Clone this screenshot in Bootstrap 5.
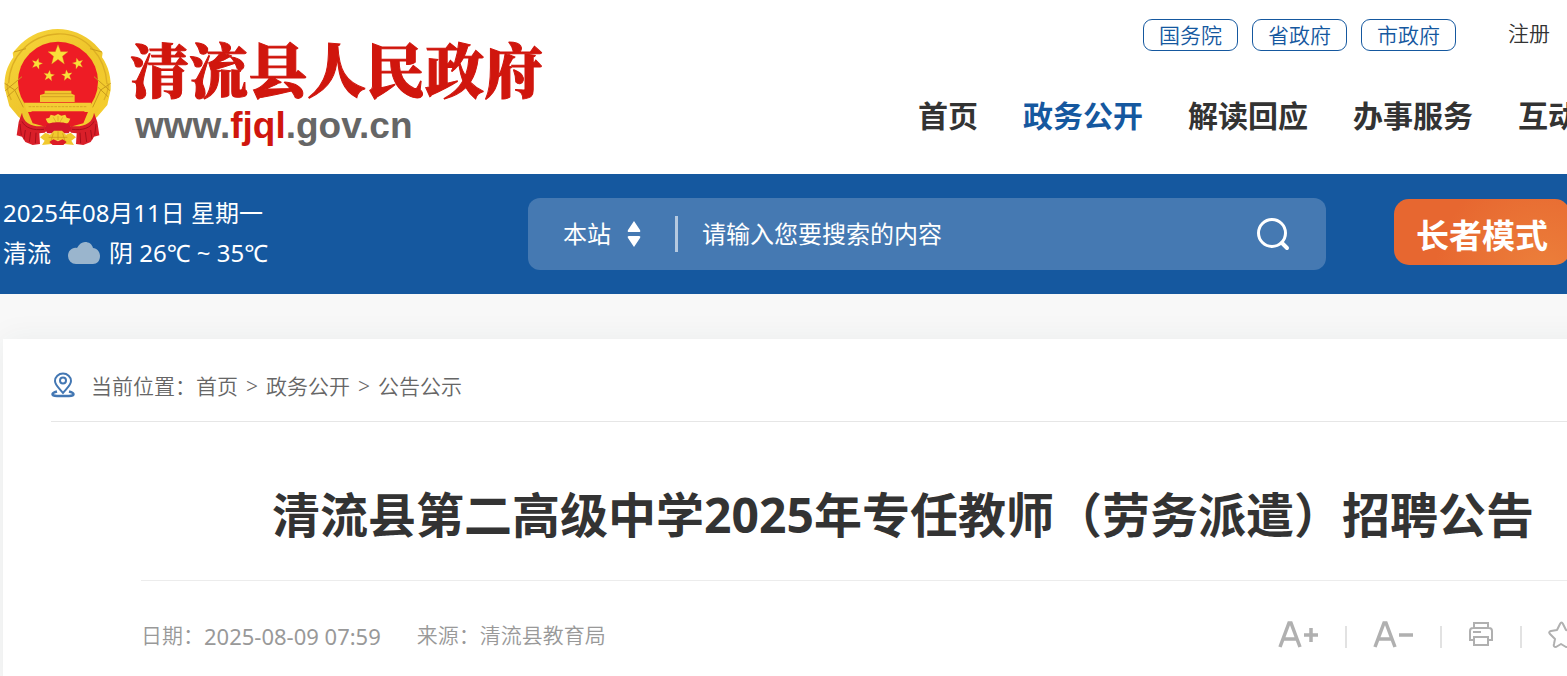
<!DOCTYPE html>
<html lang="zh-CN">
<head>
<meta charset="utf-8">
<meta name="viewport" content="width=device-width, initial-scale=1">
<title>清流县第二高级中学2025年专任教师（劳务派遣）招聘公告</title>
<link href="https://cdn.jsdelivr.net/npm/bootstrap@5.3.0/dist/css/bootstrap.min.css" rel="stylesheet">
<style>
  :root { --gov-blue: #15589f; --ink: #333; }
  body { font-family: "Noto Sans", "Noto Sans CJK SC", sans-serif; background: #f8f8f8; color: var(--ink); overflow-x: hidden; }
  a { color: inherit; text-decoration: none; }
  .site { min-width: 1806px; padding: 0 3px; }
  .site-head { height: 174px; padding-right: 222px; }
  .brand-emblem { width: 130px; height: 135px; margin-left: -3px; margin-top: 20px; }
  .brand-words { margin-top: 34px; }
  .brand-name { font-family: "Noto Serif CJK SC", "Noto Sans CJK SC", sans-serif; font-weight: 900; font-size: 59px; line-height: 68px; color: #d0160d; -webkit-text-stroke: 1px #d0160d; }
  .brand-url { font-family: "Liberation Sans", sans-serif; font-weight: 700; font-size: 37px; line-height: 48px; color: #666; padding-left: 5px; }
  .brand-url b { color: #d0160d; }
  .head-links { width: 663px; }
  .quick { font-size: 21px; padding: 19px 0 0 225px; gap: 14px; font-weight: 350; }
  .quick .pill { width: 95px; height: 32px; line-height: 30px; border: 1px solid var(--gov-blue); border-radius: 9px; color: var(--gov-blue); text-align: center; }
  .quick .signup { margin-left: 38px; line-height: 28px; }
  .main-menu { margin-top: 43px; gap: 45px; font-size: 30px; line-height: 44px; font-weight: 700; }
  .main-menu .active { color: var(--gov-blue); }
  .blue-bar { background: var(--gov-blue); height: 120px; color: #fff; }
  .today { width: 525px; font-size: 24px; line-height: 40px; padding-top: 19px; }
  .search-box { width: 798px; height: 72px; margin-top: 24px; border-radius: 12px; background: #4579b2; padding: 0 35px; }
  .search-box select, .search-box input, .search-box button { appearance: none; background: none; border: 0; color: #fff; font-size: 24px; padding: 0; outline-offset: 4px; }
  .search-box select { width: 48px; }
  .search-box input::placeholder { color: #fff; opacity: 1; }
  .search-box input { line-height: 36px; }
  .split { width: 3px; height: 36px; background: #b5c9e0; margin: 0 24px 0 34px; }
  .elder { width: 176px; height: 66px; margin: 25px 0 0 68px; border: 0; border-radius: 15px; color: #fff; font-size: 33px; font-weight: 700; line-height: 66px; padding: 4px 0 0; background: radial-gradient(circle at 85% 115%, #ec803b, #e76730 65%); }
  .sheet { margin-top: 45px; background: #fff; min-height: calc(100vh - 339px); box-shadow: 0 0 30px rgba(20, 60, 60, .06); padding-left: 48px; }
  .crumbs { height: 83px; padding-top: 14px; border-bottom: 1px solid #e6e6e6; font-size: 21px; color: #666; font-weight: 350; }
  .crumbs ol { gap: 8px; }
  .article { padding: 0 138px 0 90px; }
  .article h1 { font-size: 48px; line-height: 72px; font-weight: 700; margin: 0; padding: 57px 0 29px; text-align: center; white-space: nowrap; border-bottom: 1px solid #ececec; }
  .meta { height: 110px; font-size: 21px; color: #999; padding-right: 90px; font-weight: 350; }
  .meta time { font-size: 22px; font-weight: 400; line-height: 30px; margin-right: 36px; }
  .tools { gap: 26px; color: #b0b0b0; padding-bottom: 4px; }
  .tools button { border: 0; padding: 0; background: none; color: inherit; display: flex; }
  .tools i { width: 2px; height: 22px; background: #e2e2e2; margin-top: 6px; }
</style>
</head>
<body>
<div class="bg-white">
  <div class="site">
    <header class="site-head d-flex justify-content-between">
      <a href="#" class="d-flex" aria-label="清流县人民政府">
        <svg class="brand-emblem" viewBox="0 0 390 405" aria-hidden="true">
          <defs>
            <linearGradient id="gold" x1="0" y1="0" x2="1" y2="1"><stop offset="0" stop-color="#f7d63c"/><stop offset=".5" stop-color="#efc62c"/><stop offset="1" stop-color="#f6cf2e"/></linearGradient>
            <path id="star" d="M0-31 8-10H30L13 4 19 27 0 13-19 27-13 4-30-10H-8Z"/>
          </defs>
          <path d="M173 27C130 28 92 44 62 72L38 98 40 112C20 140 12 170 14 205L28 258 55 290 90 318 130 326H218L256 318 292 290 322 255 332 210C334 175 326 140 306 112L308 98 284 72C252 42 214 28 173 27Z" fill="url(#gold)"/>
          <path d="M26 190C30 110 88 46 173 42S316 112 321 192M34 240C24 220 20 205 22 190M312 240C322 220 326 205 324 190" fill="none" stroke="#dcae24" stroke-width="4"/>
          <circle cx="174" cy="185" r="120" fill="#ee1c25"/>
          <path d="M16 212 66 170M22 230 56 200M42 96 78 86M330 212 282 170M324 230 292 200M306 96 270 86M14 190 44 210 70 262M332 190 302 210 278 262" fill="none" stroke="#c99b1d" stroke-width="3"/>
          <g fill="#fadf3a" stroke="#d9a01f" stroke-width="1">
            <use href="#star" transform="translate(174 105)"/>
            <use href="#star" transform="translate(111 131) scale(.54) rotate(15)"/>
            <use href="#star" transform="translate(234 130) scale(.54) rotate(-15)"/>
            <use href="#star" transform="translate(147 167) scale(.54) rotate(8)"/>
            <use href="#star" transform="translate(201 166) scale(.54) rotate(-8)"/>
          </g>
          <path d="M134 212H214V221L224 225V246H120V225L134 221Z" fill="#f2c62f"/>
          <path d="M124 230H220M134 221H214" stroke="#c48c1c" stroke-width="2"/>
          <path d="M72 248H274L268 274H80Z" fill="#f3cd34"/>
          <path d="M86 260H260" stroke="#d8a625" stroke-width="3" stroke-dasharray="8 3"/>
          <path d="M84 276H264L250 310 206 322H142L98 310Z" fill="#e81b24"/>
          <path d="M50 262C68 276 70 292 84 306L66 300ZM298 262C280 276 278 292 264 306L282 300Z" fill="#f2c92f"/>
          <path d="M66 278C70 310 96 322 134 318L146 326 134 338 118 340 120 372 98 375 76 366 66 350 50 346 56 306ZM282 278C278 310 252 322 214 318L202 326 214 338 230 340 228 372 250 375 272 366 282 350 298 346 292 306Z" fill="#d91f29"/>
          <path d="M66 304C76 324 100 332 132 328M60 312 64 346M76 330 72 358M92 336 88 366M108 338 106 370M282 304C272 324 248 332 216 328M288 312 284 346M272 330 276 358M256 336 260 366M240 338 242 370" fill="none" stroke="#a90f1b" stroke-width="3"/>
          <path d="M174 282 184 287 196 284 200 293 211 296 206 307 196 314H152L142 307 137 296 148 293 152 284 164 287Z" fill="#f6d437"/>
          <path d="M174 288V304M160 292 168 306M188 292 180 306" stroke="#d49e22" stroke-width="2"/>
          <path d="M140 314C150 304 198 304 208 314L214 326 206 340H142L134 326Z" fill="#d4172a"/>
          <path d="M120 352 136 338 150 344 162 332H186L198 344 212 338 228 352 214 362 222 375 192 372 184 362H164L156 372 126 375 134 362Z" fill="#f1c92e"/>
          <path d="M146 352H202M160 340 152 366M188 340 196 366M174 334V360" stroke="#c98f1d" stroke-width="2"/>
          <path d="M148 366 160 358 174 364 188 358 200 366 190 375H158Z" fill="#dc1c26"/>
        </svg>
        <span class="brand-words d-flex flex-column text-nowrap">
          <span class="brand-name">清流县人民政府</span>
          <span class="brand-url">www.<b>fjql</b>.gov.cn</span>
        </span>
      </a>
      <div class="head-links text-nowrap">
        <div class="quick d-flex">
          <a class="pill" href="#">国务院</a>
          <a class="pill" href="#">省政府</a>
          <a class="pill" href="#">市政府</a>
          <a class="signup" href="#">注册</a>
        </div>
        <nav class="main-menu d-flex" aria-label="主导航">
          <a href="#">首页</a>
          <a href="#" class="active">政务公开</a>
          <a href="#">解读回应</a>
          <a href="#">办事服务</a>
          <a href="#">互动</a>
        </nav>
      </div>
    </header>
  </div>
</div>
<div class="blue-bar">
  <div class="site d-flex">
    <div class="today flex-shrink-0">
      <div>2025年08月11日 星期一</div>
      <div class="d-flex align-items-center">
        <span>清流</span>
        <svg class="ms-3 me-2" width="34" height="24" viewBox="0 0 34 24" aria-hidden="true"><path d="M9 23A8 8 0 0 1 1 15C1 10 5 6 10 7 12 3 15 1 18 1 22 1 25 3 26 7 30 7 33 11 33 15 33 20 30 23 26 23Z" fill="#9ab5cd"/></svg>
        <span>阴 26℃ ~ 35℃</span>
      </div>
    </div>
    <form class="search-box d-flex align-items-center flex-shrink-0" role="search">
      <select aria-label="搜索范围"><option>本站</option></select>
      <svg class="ms-3" width="14" height="26" viewBox="0 0 14 26" aria-hidden="true"><path d="M7 0 13 9Q14 11 12 11H2Q0 11 1 9ZM7 26 13 17Q14 15 12 15H2Q0 15 1 17Z" fill="#fff"/></svg>
      <span class="split"></span>
      <input class="flex-grow-1" type="text" placeholder="请输入您要搜索的内容" aria-label="搜索内容">
      <button type="button" aria-label="搜索"><svg class="d-block" width="36" height="36" viewBox="0 0 36 36" fill="none" stroke="#fff" stroke-width="3"><circle cx="17" cy="17" r="13.5"/><path d="M27 27 32 32" stroke-width="4" stroke-linecap="round"/></svg></button>
    </form>
    <button class="elder flex-shrink-0" type="button">长者模式</button>
  </div>
</div>
<div class="site">
  <main class="sheet">
    <nav class="crumbs d-flex align-items-center" aria-label="当前位置">
      <svg class="me-3 mb-1" width="24" height="26" viewBox="0 0 24 26" fill="none" stroke="#4377b3" stroke-width="2" aria-hidden="true"><path d="M12 21C8 16 4 13 4 9A8 7.500 0 0 1 20 9C20 13 16 16 12 21Z"/><circle cx="12" cy="8.500" r="3"/><path d="M6 19.500C0 21 0 24 6 24H18C24 24 24 21 18 19.500" stroke-width="2.500"/></svg>
      <span>当前位置：</span>
      <ol class="list-unstyled d-flex m-0">
        <li><a href="#">首页</a></li><li>&gt;</li><li><a href="#">政务公开</a></li><li>&gt;</li><li><a href="#">公告公示</a></li>
      </ol>
    </nav>
    <article class="article">
      <h1>清流县第二高级中学2025年专任教师（劳务派遣）招聘公告</h1>
      <div class="meta d-flex align-items-center justify-content-between">
        <div class="d-flex align-items-center">
          <span>日期：</span><time>2025-08-09 07:59</time>
          <span>来源：清流县教育局</span>
        </div>
        <div class="tools d-flex align-items-center">
          <button type="button" aria-label="放大字体"><svg width="41" height="28" viewBox="0 0 41 28" fill="none" stroke="currentColor" stroke-width="3.500"><path d="M2 27 11 3H13L22 27M5 19H19M26 15H40M33 8V22"/></svg></button><i></i>
          <button type="button" aria-label="缩小字体"><svg width="41" height="28" viewBox="0 0 41 28" fill="none" stroke="currentColor" stroke-width="3.500"><path d="M2 27 11 3H13L22 27M5 19H19M26 15H40"/></svg></button><i></i>
          <button type="button" aria-label="打印"><svg width="26" height="26" viewBox="0 0 26 26" fill="none" stroke="currentColor" stroke-width="2"><path d="M6 7V2H20V7M6 19H2V10Q2 7 5 7H21Q24 7 24 10V19H20M6 16H20V24H6ZM5 11H13"/></svg></button><i></i>
          <button type="button" aria-label="收藏"><svg width="27" height="27" viewBox="0 0 27 27" fill="none" stroke="currentColor" stroke-width="2" stroke-linejoin="round"><path d="M12 3Q13.500 0 15 3L18 9 24 10Q27 11 25 13L20 18 21 24Q21 27 18 26L13 23 8 26Q5 26 6 23L7 18 2 13Q0 11 3 10L9 9Z"/></svg></button>
        </div>
      </div>
    </article>
  </main>
</div>
<script src="https://cdn.jsdelivr.net/npm/bootstrap@5.3.0/dist/js/bootstrap.bundle.min.js"></script>
</body>
</html>
